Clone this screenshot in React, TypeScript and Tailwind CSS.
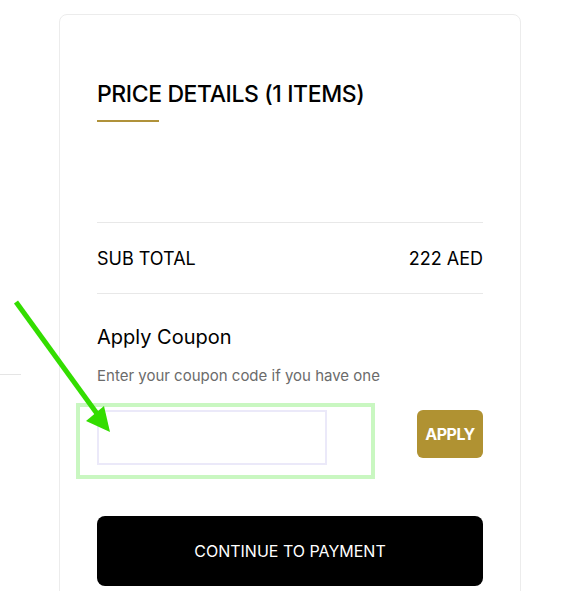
import React from "react";

export default function App() {
  return (
    <div
      className="relative w-[562px] h-[591px] overflow-hidden bg-white"
      style={{ fontFamily: "Inter, 'Liberation Sans', sans-serif" }}
    >
      <div className="absolute left-0 top-[374px] w-[21px] h-px bg-[#e5e5e5]" />

      <div className="ml-[59px] mt-[14px] w-[462px] h-[600px] rounded-[8px] border border-[#ececec] bg-white px-[37px] pt-[64px]">
        <h2 className="text-[23px] font-medium tracking-[-0.4px] text-black leading-[30px]">
          PRICE DETAILS (1 ITEMS)
        </h2>
        <div className="mt-[11px] w-[62px] h-[2px] bg-[#b0923a]" />

        <div className="mt-[100px] border-t border-[#e8e8e8]" />
        <div className="flex justify-between items-center h-[70px] text-[18px] text-black">
          <span>SUB TOTAL</span>
          <span>222 AED</span>
        </div>
        <div className="border-t border-[#e8e8e8]" />

        <h3 className="mt-[29px] text-[20px] text-black leading-[28px]">Apply Coupon</h3>
        <p className="mt-[15px] text-[15px] text-[#6b6b6b] leading-[20px]">
          Enter your coupon code if you have one
        </p>

        <div className="mt-[24px] flex justify-between items-start">
          <input className="w-[230px] h-[55px] border-2 border-[#ebe9f9] outline-none px-3" />
          <button className="w-[66px] h-[48px] rounded-[6px] bg-[#b09232] text-white text-[16px] font-bold tracking-[-0.5px]">
            APPLY
          </button>
        </div>

        <button className="mt-[51px] w-full h-[70px] rounded-[8px] bg-black text-white text-[16px]">
          CONTINUE TO PAYMENT
        </button>
      </div>

      {/* annotation: highlight box around coupon input */}
      <div className="absolute left-[76px] top-[403px] w-[299px] h-[76px] border-[4px] border-[#c9f7c1]" />

      {/* annotation arrow */}
      <svg className="absolute left-0 top-0" width="562" height="591" viewBox="0 0 562 591">
        <line x1="16" y1="302" x2="98" y2="415" stroke="#33dd00" strokeWidth="5" />
        <polygon points="110,432 86,421 104,406" fill="#33dd00" />
      </svg>
    </div>
  );
}
